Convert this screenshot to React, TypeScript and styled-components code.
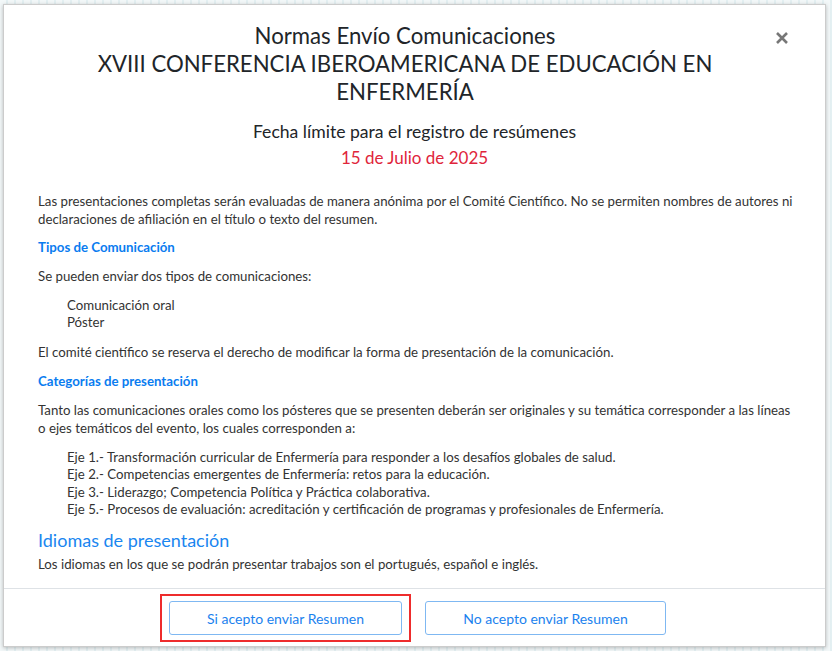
import React from 'react';
import styled, { createGlobalStyle } from 'styled-components';

const FONT = `"Segoe UI", Lato, "Noto Sans", sans-serif`;

const GlobalStyle = createGlobalStyle`
  html, body {
    margin: 0;
    padding: 0;
    background: #eef4f5;
    font-family: ${FONT};
    color: #333;
  }
  #root {
    height: 651px;
    overflow: hidden;
  }
`;

const Page = styled.div`
  padding: 4px 6px 0 3px;
  height: 651px;
  box-sizing: border-box;
  background:
    repeating-linear-gradient(90deg, transparent 0 6px, rgba(200, 225, 230, 0.35) 6px 8px),
    #f3f8f9;
`;

const Modal = styled.div`
  background: #fff;
  border: 1px solid rgba(0, 0, 0, 0.2);
  box-shadow: 0 1px 4px rgba(0, 0, 0, 0.25);
  height: 643px;
  box-sizing: border-box;
  display: flex;
  flex-direction: column;
`;

const Header = styled.div`
  display: flex;
  align-items: flex-start;
  padding: 17px 16px 0 16px;
`;

const Title = styled.h1`
  flex: 1;
  margin: 0;
  padding-left: 18px;
  text-align: center;
  font-weight: 400;
  font-size: 22.2px;
  line-height: 28px;
  color: #212529;
`;

const Close = styled.button`
  width: 20px;
  margin: 9px 17px 0 0;
  padding: 0;
  border: 0;
  background: none;
  color: #777;
  cursor: pointer;
  display: flex;
  justify-content: center;
`;

const Deadline = styled.div`
  margin-top: 13px;
  text-align: center;
  font-size: 17.6px;
  line-height: 26px;
  color: #212529;
`;

const DeadlineDate = styled.div`
  color: #e0253b;
  font-size: 17px;
`;

const Body = styled.div`
  flex: 1;
  padding: 21px 30px 0 34px;
  font-size: 13.25px;
  line-height: 18px;
`;

const Para = styled.p<{ $gap?: number }>`
  margin: ${p => p.$gap ?? 0}px 0 0;
`;

const Subhead = styled.h3<{ $gap?: number }>`
  margin: ${p => p.$gap ?? 10}px 0 0;
  font-size: 13.25px;
  line-height: 18px;
  font-weight: 700;
  color: #0a7cf0;
`;

const Heading = styled.h2`
  margin: 10px 0 3px;
  font-size: 18px;
  line-height: 24px;
  font-weight: 400;
  color: #1a86f0;
`;

const List = styled.ul<{ $gap: number }>`
  list-style: none;
  margin: ${p => p.$gap}px 0 0;
  padding: 0 0 0 29px;
  line-height: 17.4px;
`;

const Footer = styled.div`
  border-top: 1px solid #dee2e6;
  height: 58px;
  display: flex;
  justify-content: center;
  align-items: flex-start;
  gap: 14px;
  padding: 5px 3px 0 0;
  box-sizing: border-box;
`;

const Highlight = styled.div`
  border: 2px solid #ee2c2c;
  padding: 5px 7px;
`;

const Button = styled.button<{ $w: number; $top?: number }>`
  width: ${p => p.$w}px;
  height: 34px;
  margin-top: ${p => p.$top ?? 0}px;
  border: 1px solid #7fb8f2;
  border-radius: 3px;
  background: #fff;
  color: #1b82ee;
  font-family: ${FONT};
  font-size: 14px;
  cursor: pointer;
`;

const CloseIcon = () => (
  <svg width="14" height="14" viewBox="0 0 14 14">
    <path d="M2 2 L12 12 M12 2 L2 12" stroke="currentColor" strokeWidth="2.6" />
  </svg>
);

const ejes = [
  'Eje 1.- Transformación curricular de Enfermería para responder a los desafíos globales de salud.',
  'Eje 2.- Competencias emergentes de Enfermería: retos para la educación.',
  'Eje 3.- Liderazgo; Competencia Política y Práctica colaborativa.',
  'Eje 5.- Procesos de evaluación: acreditación y certificación de programas y profesionales de Enfermería.',
];

export default function App() {
  return (
    <>
      <GlobalStyle />
      <Page>
        <Modal>
          <Header>
            <Title>
              Normas Envío Comunicaciones
              <br />
              XVIII CONFERENCIA IBEROAMERICANA DE EDUCACIÓN EN ENFERMERÍA
            </Title>
            <Close aria-label="Cerrar">
              <CloseIcon />
            </Close>
          </Header>
          <Deadline>
            Fecha límite para el registro de resúmenes
            <DeadlineDate>15 de Julio de 2025</DeadlineDate>
          </Deadline>
          <Body>
            <Para>
              Las presentaciones completas serán evaluadas de manera anónima por el Comité Científico. No se
              permiten nombres de autores ni declaraciones de afiliación en el título o texto del resumen.
            </Para>
            <Subhead>Tipos de Comunicación</Subhead>
            <Para $gap={11}>Se pueden enviar dos tipos de comunicaciones:</Para>
            <List $gap={12}>
              <li>Comunicación oral</li>
              <li>Póster</li>
            </List>
            <Para $gap={11}>
              El comité científico se reserva el derecho de modificar la forma de presentación de la comunicación.
            </Para>
            <Subhead $gap={11}>Categorías de presentación</Subhead>
            <Para $gap={11}>
              Tanto las comunicaciones orales como los pósteres que se presenten deberán ser originales y su
              temática corresponder a las líneas o ejes temáticos del evento, los cuales corresponden a:
            </Para>
            <List $gap={12}>
              {ejes.map(e => (
                <li key={e}>{e}</li>
              ))}
            </List>
            <Heading>Idiomas de presentación</Heading>
            <Para>Los idiomas en los que se podrán presentar trabajos son el portugués, español e inglés.</Para>
          </Body>
          <Footer>
            <Highlight>
              <Button $w={233}>Si acepto enviar Resumen</Button>
            </Highlight>
            <Button $w={241} $top={7}>
              No acepto enviar Resumen
            </Button>
          </Footer>
        </Modal>
      </Page>
    </>
  );
}
